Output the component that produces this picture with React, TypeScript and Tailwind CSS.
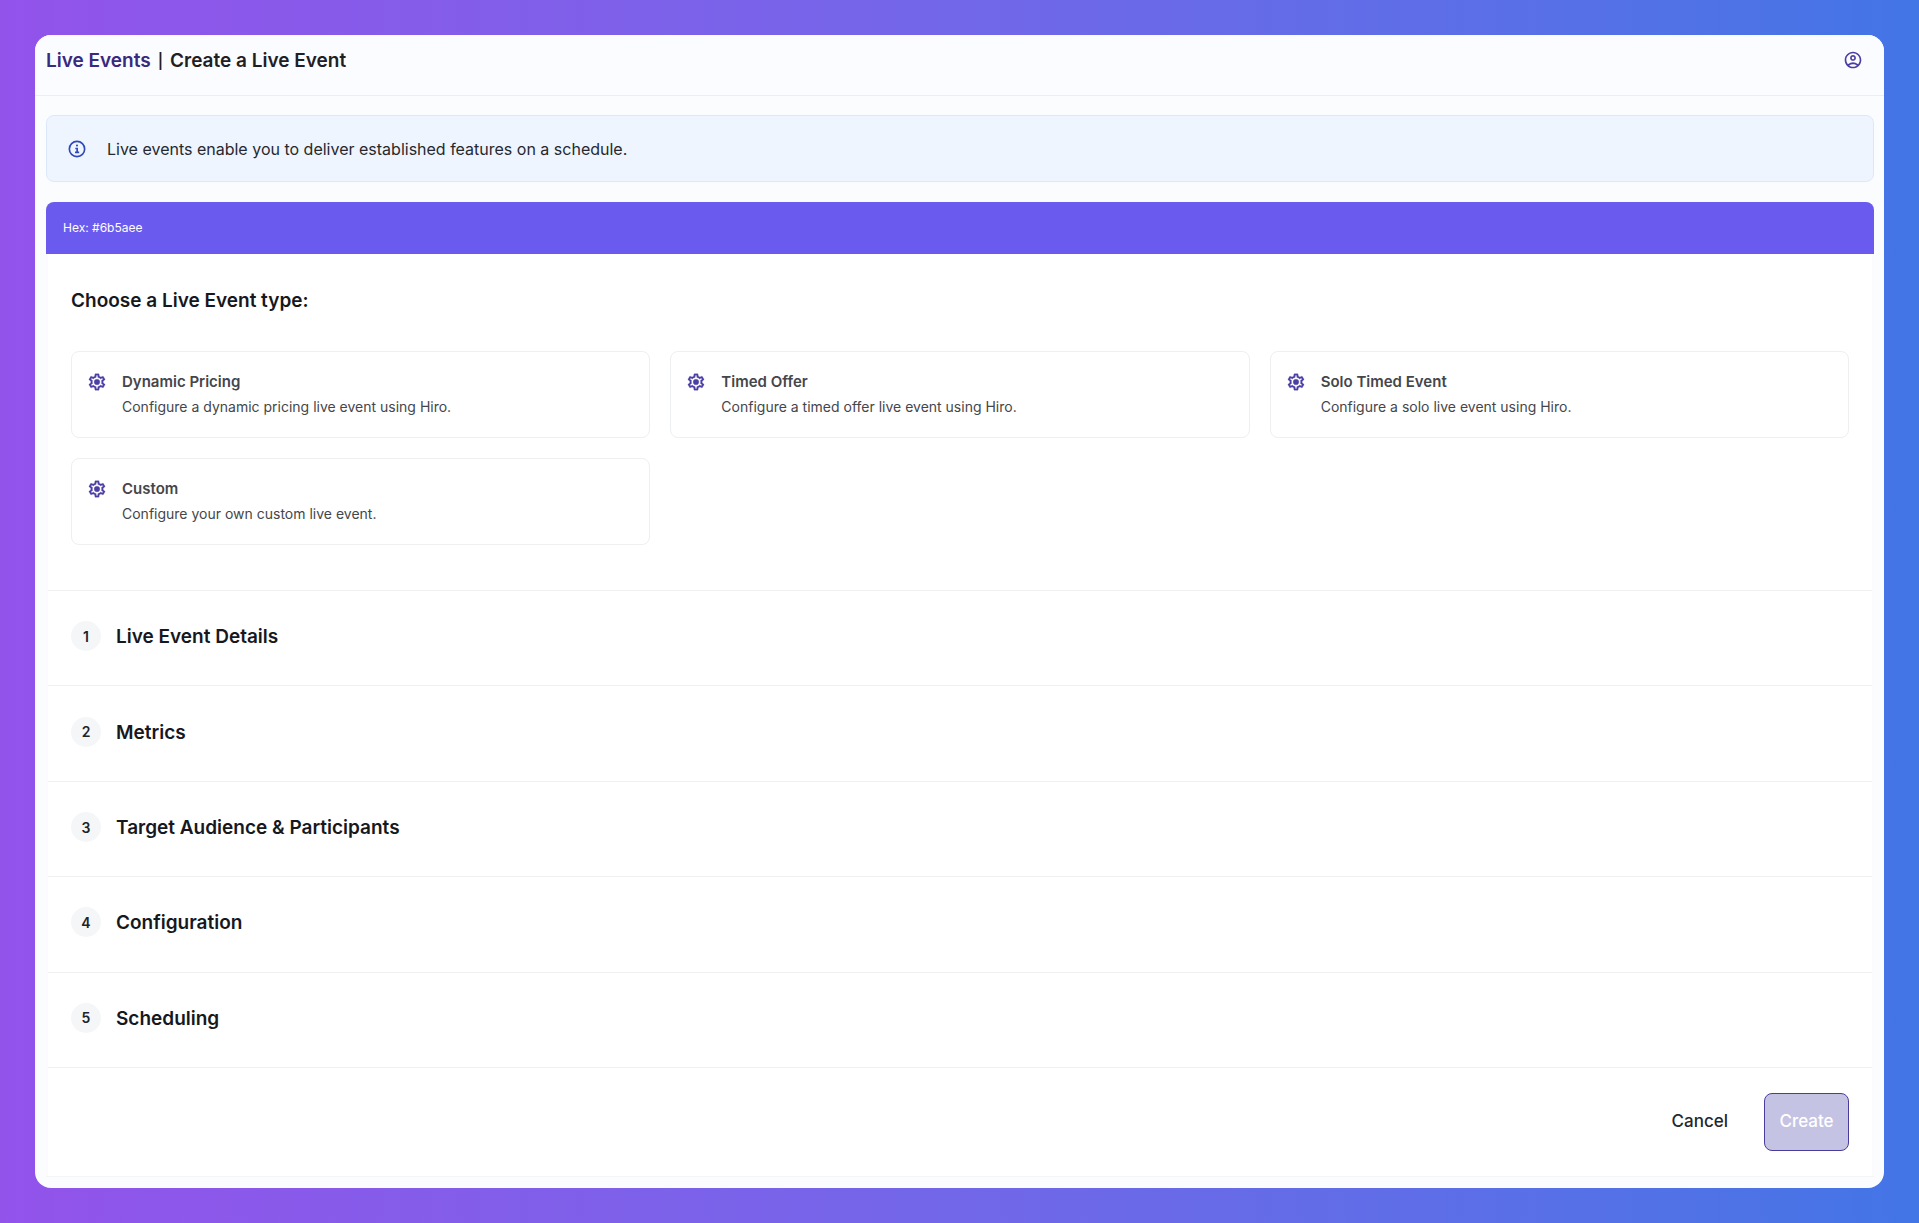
import { MdOutlineAccountCircle } from "react-icons/md";

const eventTypes = [
  {
    title: "Dynamic Pricing",
    description: "Configure a dynamic pricing live event using Hiro.",
  },
  {
    title: "Timed Offer",
    description: "Configure a timed offer live event using Hiro.",
  },
  {
    title: "Solo Timed Event",
    description: "Configure a solo live event using Hiro.",
  },
  {
    title: "Custom",
    description: "Configure your own custom live event.",
  },
];

const steps = [
  "Live Event Details",
  "Metrics",
  "Target Audience & Participants",
  "Configuration",
  "Scheduling",
];

const InfoIcon = () => (
  <svg viewBox="0 0 24 24" className="w-5 h-5 shrink-0 text-[#3148b8]" fill="none" stroke="currentColor" aria-hidden="true">
    <circle cx="12" cy="12" r="9.2" strokeWidth="2" />
    <path d="M10 11.4h2.2v4.4M9.6 16h5" strokeWidth="2" />
    <circle cx="12" cy="7.8" r="1.3" fill="currentColor" stroke="none" />
  </svg>
);

const GearIcon = () => (
  <svg viewBox="0 0 24 24" className="w-5 h-5 shrink-0 text-[#4b3fa5]" fill="currentColor" stroke="currentColor" strokeWidth="0.3" aria-hidden="true">
    <path d="M19.43 12.98c.04-.32.07-.64.07-.98 0-.34-.03-.66-.07-.98l2.11-1.65c.19-.15.24-.42.12-.64l-2-3.46a.5.5 0 0 0-.61-.22l-2.49 1c-.52-.4-1.08-.73-1.69-.98l-.38-2.65A.488.488 0 0 0 14 2h-4c-.25 0-.46.18-.49.42l-.38 2.65c-.61.25-1.17.59-1.69.98l-2.49-1a.566.566 0 0 0-.18-.03c-.17 0-.34.09-.43.25l-2 3.46c-.13.22-.07.49.12.64l2.11 1.65c-.04.32-.07.65-.07.98 0 .33.03.66.07.98l-2.11 1.65c-.19.15-.24.42-.12.64l2 3.46a.5.5 0 0 0 .61.22l2.49-1c.52.4 1.08.73 1.69.98l.38 2.65c.03.24.24.42.49.42h4c.25 0 .46-.18.49-.42l.38-2.65c.61-.25 1.17-.59 1.69-.98l2.49 1c.06.02.12.03.18.03.17 0 .34-.09.43-.25l2-3.46c.12-.22.07-.49-.12-.64l-2.11-1.65zm-1.98-1.71c.04.31.05.52.05.73 0 .21-.02.43-.05.73l-.14 1.13.89.7 1.08.84-.7 1.21-1.27-.51-1.04-.42-.9.68c-.43.32-.84.56-1.25.73l-1.06.43-.16 1.13-.2 1.35h-1.4l-.19-1.35-.16-1.13-1.06-.43c-.43-.18-.83-.41-1.23-.71l-.91-.7-1.06.43-1.27.51-.7-1.21 1.08-.84.89-.7-.14-1.13c-.03-.31-.05-.54-.05-.74s.02-.43.05-.73l.14-1.13-.89-.7-1.08-.84.7-1.21 1.27.51 1.04.42.9-.68c.43-.32.84-.56 1.25-.73l1.06-.43.16-1.13.2-1.35h1.39l.19 1.35.16 1.13 1.06.43c.43.18.83.41 1.23.71l.91.7 1.06-.43 1.27-.51.7 1.21-1.07.85-.89.7.14 1.13z" />
    <circle cx="12" cy="12" r="3.4" />
  </svg>
);

const App = () => {
  return (
    <div className="min-h-screen flex p-[35px] bg-linear-to-r from-[#9253eb] to-[#4275e6] font-['Inter','Liberation_Sans',sans-serif]">
      <div className="flex-1 flex flex-col rounded-2xl bg-[#fafcfd] overflow-hidden">
        <header className="flex items-start justify-between pt-[11px] pl-[11px] pr-[21px] h-[61px] bg-[#fbfcff] border-b border-[#eceef1]">
          <h1 className="flex items-center gap-[7px] text-[19px] leading-[30px] font-semibold text-[#1f2024]">
            <a href="#live-events" className="text-[#382a7d]">Live Events</a>
            <span className="text-[15px]">|</span>
            <span>Create a Live Event</span>
          </h1>
          <button type="button" aria-label="Account" className="h-7 flex items-center text-[#4b3fa5]">
            <MdOutlineAccountCircle className="w-5 h-5" />
          </button>
        </header>

        <main className="flex-1 flex flex-col gap-5 pl-[11px] pr-2.5 pt-[19px] pb-[11px]">
          <div className="flex items-center gap-5 h-[67px] px-5 rounded-lg border border-[#dbe8fb] bg-[#eef5ff]">
            <InfoIcon />
            <p className="text-[16px] leading-6 text-[#25292f]">
              Live events enable you to deliver established features on a schedule.
            </p>
          </div>

          <section className="flex-1 flex flex-col rounded-t-lg overflow-hidden border-b border-[#f3f5f7] bg-white">
            <div className="h-[52px] flex items-center px-[17px] bg-[#6b5aee] text-[12px] text-white">
              Hex: #6b5aee
            </div>

            <div className="flex-1 flex flex-col border-x-2 border-[#fbfbfd]">
              <div className="px-[23px] pt-8 pb-[45px]">
                <h2 className="text-[19px] leading-[30px] font-semibold text-[#16181d]">Choose a Live Event type:</h2>
                <div className="grid grid-cols-3 gap-5 mt-[35px]">
                  {eventTypes.map((type) => (
                    <button
                      key={type.title}
                      type="button"
                      className="flex items-start gap-[15px] h-[87px] pt-5 px-[15px] rounded-lg border border-[#eeeff1] text-left text-[#45464a]"
                    >
                      <GearIcon />
                      <span className="flex flex-col gap-[5px]">
                        <span className="text-[15px] leading-5 font-semibold">{type.title}</span>
                        <span className="text-[14px] leading-5">{type.description}</span>
                      </span>
                    </button>
                  ))}
                </div>
              </div>

              {steps.map((step, index) => (
                <div key={step} className="flex-1 flex items-center gap-[15px] px-[23px] pb-1 border-t border-[#eff0f2]">
                  <span className="w-[30px] h-[30px] rounded-full bg-[#f5f6f8] flex items-center justify-center text-[14px] font-semibold text-[#1f2226]">
                    {index + 1}
                  </span>
                  <h2 className="pt-0.5 text-[19px] leading-[30px] font-semibold text-[#16181d]">{step}</h2>
                </div>
              ))}

              <div className="flex justify-end items-start gap-5 px-[23px] pt-[25px] h-[109px] border-t border-[#eff0f2] text-[17px] font-medium">
                <button type="button" className="h-[58px] px-4 text-[#25272b]">Cancel</button>
                <button type="button" disabled className="h-[58px] w-[85px] rounded-lg border border-[#4a3c9c] bg-[#c5c3e3] text-white">
                  Create
                </button>
              </div>
            </div>
          </section>
        </main>
      </div>
    </div>
  );
};

export default App;
